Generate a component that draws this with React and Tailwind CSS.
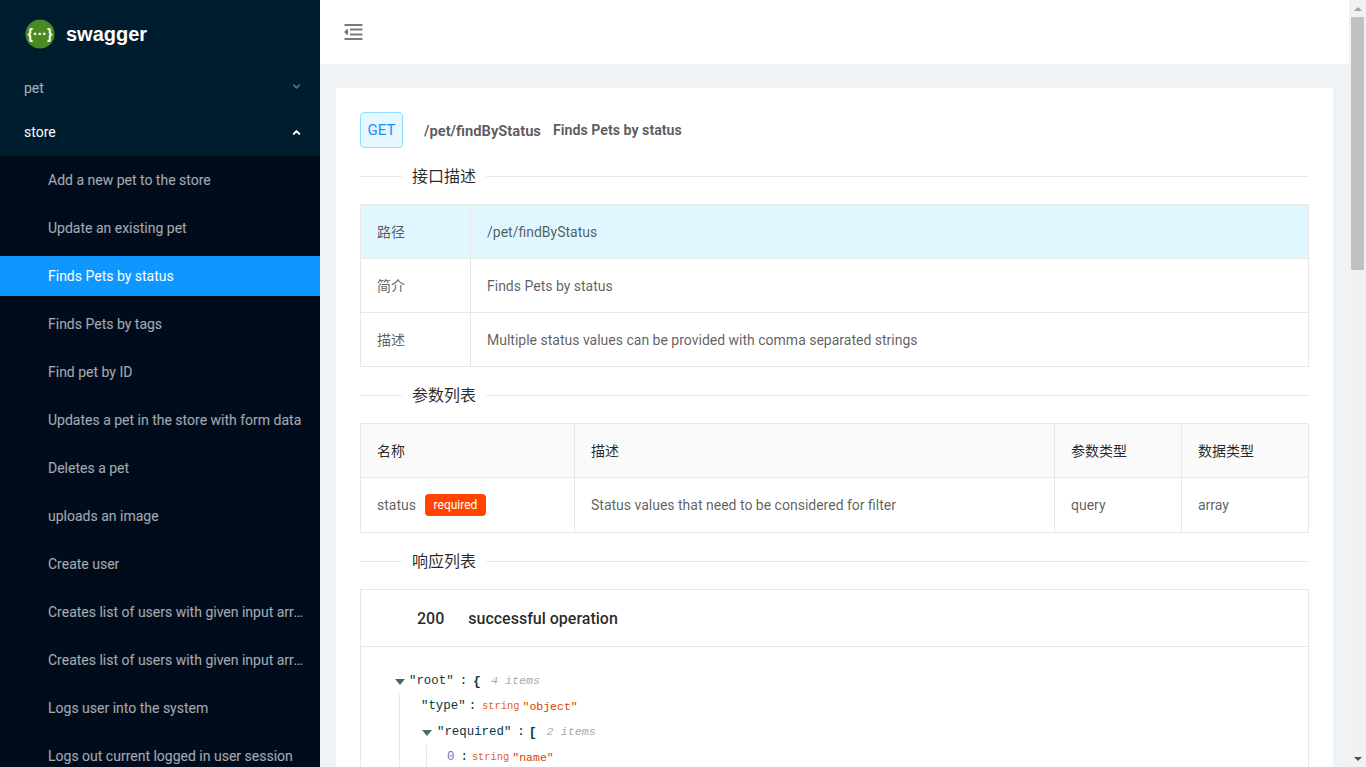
import { ChevronDown, ChevronUp } from "lucide-react";

const FONT = "font-['Roboto','Noto_Sans_CJK_SC',sans-serif]";
const MONO = "font-['Liberation_Mono','Noto_Sans_CJK_SC',monospace]";

const MENU_ITEMS = [
  "Add a new pet to the store",
  "Update an existing pet",
  "Finds Pets by status",
  "Finds Pets by tags",
  "Find pet by ID",
  "Updates a pet in the store with form data",
  "Deletes a pet",
  "uploads an image",
  "Create user",
  "Creates list of users with given input array",
  "Creates list of users with given input array",
  "Logs user into the system",
  "Logs out current logged in user session",
];

const Logo = () => (
  <svg width="30" height="30" viewBox="0 0 30 30" className="shrink-0">
    <circle cx="15" cy="15" r="14.5" fill="#4a8a24" />
    <text
      x="15"
      y="19.5"
      textAnchor="middle"
      fontSize="14"
      fontWeight="700"
      fill="#ffffff"
      fontFamily="Liberation Sans"
    >
      {"{···}"}
    </text>
  </svg>
);

const Sidebar = () => (
  <aside className="flex flex-col w-80 h-full shrink-0 overflow-hidden bg-[#001d30]">
    <div className="flex items-center h-[64px] shrink-0 pl-[25px] gap-[11px] mt-[2px] mb-[2px]">
      <Logo />
      <span className="font-['Liberation_Sans',sans-serif] font-bold text-xl text-white">
        swagger
      </span>
    </div>
    <div className="flex items-center justify-between h-10 shrink-0 pl-6 pr-[18px] text-sm text-white/65">
      <span>pet</span>
      <ChevronDown size={11} strokeWidth={4} className="text-white/35 -translate-y-0.5" />
    </div>
    <div className="flex items-center justify-between h-10 shrink-0 mt-1 pl-6 pr-[18px] text-sm text-white">
      <span>store</span>
      <ChevronUp size={11} strokeWidth={4.5} />
    </div>
    <ul className="flex flex-col gap-2 shrink-0 mt-1 py-1 bg-[#000c1c]">
      {MENU_ITEMS.map((item, i) => (
        <li
          key={i}
          className={
            i === 2
              ? "flex items-center h-10 pl-12 pr-4 text-sm text-white bg-[#0f96ff]"
              : "flex items-center h-10 pl-12 pr-4 text-sm text-white/65"
          }
        >
          <span className="truncate">{item}</span>
        </li>
      ))}
    </ul>
  </aside>
);

const SectionTitle = ({ children }) => (
  <div className="flex items-center h-6 my-4">
    <div className="w-[42px] h-px bg-[#e8e8e8]" />
    <span className="px-2.5 pt-px text-base text-black/85">{children}</span>
    <div className="flex-1 h-px bg-[#e8e8e8]" />
  </div>
);

const InfoRow = ({ label, value, highlight }) => (
  <div
    className={
      highlight
        ? "flex h-[54px] items-center bg-[#e0f7ff] border-b border-[#e8e8e8]"
        : "flex h-[54px] items-center border-b border-[#e8e8e8]"
    }
  >
    <div className="flex items-center w-[110px] h-full pl-4 border-r border-[#e8e8e8] text-sm text-black/65">
      {label}
    </div>
    <div className="pl-4 text-sm text-black/65">{value}</div>
  </div>
);

const Caret = () => (
  <span className="w-0 h-0 mr-1 border-x-[5px] border-x-transparent border-t-[6px] border-t-[#4a6a6a]" />
);

const JsonKey = ({ children }) => <span className="text-[12.4px] text-[#073642]">{children}</span>;
const JsonColon = ({ className }) => <span className={`text-[12.4px] text-[#073642] ${className}`}>:</span>;
const JsonType = () => <span className="text-[10.4px] text-[#e4622a] mr-[3px]">string</span>;
const JsonValue = ({ children }) => <span className="text-[11.5px] text-[#d33f00]">{children}</span>;
const JsonCount = ({ children }) => <span className="ml-2.5 text-[11.7px] italic text-[#aaaaaa]">{children}</span>;

const JsonView = () => (
  <div className={`${MONO} pt-[22px] pl-[34px]`}>
    <div className="flex items-center h-[25px]">
      <Caret />
      <JsonKey>"root"</JsonKey>
      <JsonColon className="mx-[6px]" />
      <span className="text-[13px] font-bold text-[#073642]">{"{"}</span>
      <JsonCount>4 items</JsonCount>
    </div>
    <div className="ml-[4px] border-l border-[#e8e8e8] pl-[21px]">
      <div className="flex items-center h-[25px]">
        <JsonKey>"type"</JsonKey>
        <JsonColon className="ml-[3px] mr-[6px]" />
        <JsonType />
        <JsonValue>"object"</JsonValue>
      </div>
      <div className="flex items-center h-[25px] mt-px pl-px">
        <Caret />
        <span className="ml-px" />
        <JsonKey>"required"</JsonKey>
        <JsonColon className="ml-[6px] mr-1" />
        <span className="text-[13px] font-bold text-[#073642]">[</span>
        <JsonCount>2 items</JsonCount>
      </div>
      <div className="ml-[5px] border-l border-[#e8e8e8] pl-5">
        <div className="flex items-center h-[25px]">
          <span className="text-[12.4px] text-[#6c71c4]">0</span>
          <JsonColon className="ml-[6px] mr-1" />
          <JsonType />
          <JsonValue>"name"</JsonValue>
        </div>
      </div>
    </div>
  </div>
);

const Scrollbar = () => (
  <div className="flex flex-col items-center w-[17px] h-full shrink-0 bg-[#f1f1f1]">
    <div className="flex items-center justify-center h-[17px]">
      <span className="w-0 h-0 border-x-4 border-x-transparent border-b-4 border-b-[#a3a3a3]" />
    </div>
    <div className="w-[13px] h-[253px] bg-[#c1c1c1]" />
    <div className="flex-1" />
    <div className="flex items-center justify-center h-[17px]">
      <span className="w-0 h-0 border-x-4 border-x-transparent border-t-4 border-t-[#505050]" />
    </div>
  </div>
);

const Content = () => (
  <main className="flex-1 min-w-0 h-full overflow-hidden bg-[#eff3f6]">
    <header className="flex items-center h-16 pl-6 bg-white">
      <svg width="19" height="16" viewBox="0 0 19 16">
        <rect x="0.5" y="0" width="18" height="2" fill="#7a7a7a" />
        <rect x="6" y="4.5" width="12.5" height="2" fill="#7a7a7a" />
        <rect x="6" y="9.5" width="12.5" height="2" fill="#7a7a7a" />
        <rect x="0.5" y="14" width="18" height="2" fill="#7a7a7a" />
        <path d="M4 4.5v7L0 8z" fill="#7a7a7a" />
      </svg>
    </header>
    <div className="mt-6 mx-4 p-6 bg-white">
      <div className="flex items-center h-9">
        <span className="flex items-center justify-center w-[43px] h-9 pt-px rounded border border-[#8fdcff] bg-[#e6f7ff] text-[15px] text-[#1890ff]">
          GET
        </span>
        <span className="ml-[21px] pt-0.5 text-[14.7px] font-bold text-black/65">/pet/findByStatus</span>
        <span className="ml-3 pt-0.5 text-[14.2px] font-bold text-black/65">Finds Pets by status</span>
      </div>
      <SectionTitle>接口描述</SectionTitle>
      <div className="border-t border-x border-[#e8e8e8]">
        <InfoRow highlight label="路径" value="/pet/findByStatus" />
        <InfoRow label="简介" value="Finds Pets by status" />
        <InfoRow label="描述" value="Multiple status values can be provided with comma separated strings" />
      </div>
      <SectionTitle>参数列表</SectionTitle>
      <div className="border-t border-x border-[#e8e8e8]">
        <div className="flex h-[54px] bg-[#fafafa] border-b border-[#e8e8e8] text-sm text-black/85">
          <div className="flex items-center w-[214px] pl-4 border-r border-[#e8e8e8]">名称</div>
          <div className="flex items-center w-[480px] pl-4 border-r border-[#e8e8e8]">描述</div>
          <div className="flex items-center w-[127px] pl-4 border-r border-[#e8e8e8]">参数类型</div>
          <div className="flex items-center flex-1 pl-4">数据类型</div>
        </div>
        <div className="flex h-[55px] border-b border-[#e8e8e8] text-sm text-black/65">
          <div className="flex items-center w-[214px] pl-4 border-r border-[#e8e8e8]">
            status
            <span className="ml-[9px] w-[61px] h-[22px] text-center leading-[22px] rounded bg-[#ff4500] text-xs text-white">
              required
            </span>
          </div>
          <div className="flex items-center w-[480px] pl-4 border-r border-[#e8e8e8]">
            Status values that need to be considered for filter
          </div>
          <div className="flex items-center w-[127px] pl-4 border-r border-[#e8e8e8]">query</div>
          <div className="flex items-center flex-1 pl-4">array</div>
        </div>
      </div>
      <SectionTitle>响应列表</SectionTitle>
      <div className="border border-[#e8e8e8]">
        <div className="flex items-center h-[57px] pl-14 pt-px gap-6 border-b border-[#e8e8e8] text-base font-medium text-black/85">
          <span>200</span>
          <span>successful operation</span>
        </div>
        <JsonView />
      </div>
    </div>
  </main>
);

const App = () => (
  <div className={`${FONT} flex w-full h-screen overflow-hidden bg-white`}>
    <Sidebar />
    <Content />
    <Scrollbar />
  </div>
);

export default App;
